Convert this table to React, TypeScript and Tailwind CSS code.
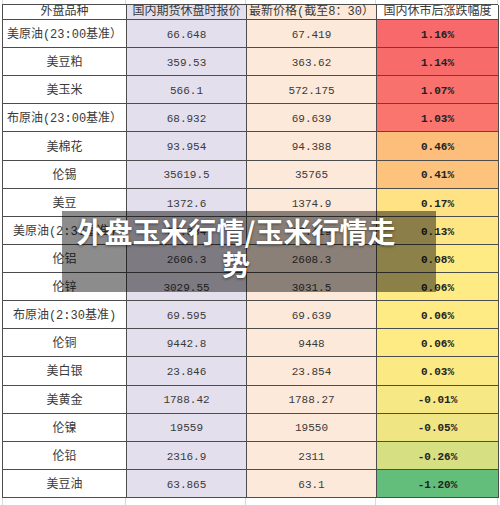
import React from 'react';

interface Row {
  name: string;
  close: string;
  latest: string;
  change: string;
  color: string;
}

const rows: Row[] = [
  { name: '美原油(23:00基准）', close: '66.648', latest: '67.419', change: '1.16%', color: '#f8696b' },
  { name: '美豆粕', close: '359.53', latest: '363.62', change: '1.14%', color: '#f86b6b' },
  { name: '美玉米', close: '566.1', latest: '572.175', change: '1.07%', color: '#f8716c' },
  { name: '布原油(23:00基准）', close: '68.932', latest: '69.639', change: '1.03%', color: '#f9756d' },
  { name: '美棉花', close: '93.954', latest: '94.388', change: '0.46%', color: '#fdbd7b' },
  { name: '伦锡', close: '35619.5', latest: '35765', change: '0.41%', color: '#fdc37c' },
  { name: '美豆', close: '1372.6', latest: '1374.9', change: '0.17%', color: '#ffe283' },
  { name: '美原油(2:30基准)', close: '67.334', latest: '67.419', change: '0.13%', color: '#ffe684' },
  { name: '伦铝', close: '2606.3', latest: '2608.3', change: '0.08%', color: '#ffeb84' },
  { name: '伦锌', close: '3029.55', latest: '3031.5', change: '0.06%', color: '#feeb84' },
  { name: '布原油(2:30基准)', close: '69.595', latest: '69.639', change: '0.06%', color: '#feeb84' },
  { name: '伦铜', close: '9442.8', latest: '9448', change: '0.06%', color: '#feeb84' },
  { name: '美白银', close: '23.846', latest: '23.854', change: '0.03%', color: '#fbea84' },
  { name: '美黄金', close: '1788.42', latest: '1788.27', change: '-0.01%', color: '#f6e884' },
  { name: '伦镍', close: '19559', latest: '19550', change: '-0.05%', color: '#efe683' },
  { name: '伦铅', close: '2316.9', latest: '2311', change: '-0.26%', color: '#d6df81' },
  { name: '美豆油', close: '63.865', latest: '63.1', change: '-1.20%', color: '#63be7b' }
];

const font = "font-['Liberation_Mono','Noto_Sans_CJK_SC',monospace]";

const Strip: React.FC<{ h: string }> = ({ h }) => (
  <div className={`grid grid-cols-[124px_120px_130px_122px] pl-[2px] ${h}`}>
    <div className="border-l border-r border-[#d9d9d9]" />
    <div className="border-r border-[#d9d9d9]" />
    <div className="border-r border-[#d9d9d9]" />
    <div className="border-r border-[#d9d9d9]" />
  </div>
);

const App: React.FC = () => {
  return (
    <div className="relative h-[505px] w-[500px] overflow-hidden bg-white">
      <Strip h="h-[4px]" />

      <div className="pl-[2px]">
        <div className={`grid h-[494px] w-[496px] grid-cols-[124px_120px_130px_122px] grid-rows-[15px_repeat(17,minmax(0,1fr))] border-l border-t border-[#4d4d4d] text-[#3a3a3a] ${font}`}>
          <div className="flex items-end justify-center border-b border-r border-[#4d4d4d] bg-white text-[12px] leading-[14px]">外盘品种</div>
          <div className="flex items-end justify-center border-b border-r border-[#4d4d4d] bg-[#e4dfec] text-[12px] leading-[14px]">国内期货休盘时报价</div>
          <div className="flex items-end justify-center border-b border-r border-[#4d4d4d] bg-[#fde9d9] text-[12px] leading-[14px]">最新价格(截至8：30）</div>
          <div className="flex items-end justify-center border-b border-r border-[#4d4d4d] bg-white text-[12px] leading-[14px]">国内休市后涨跌幅度</div>

          {rows.map((r) => (
            <React.Fragment key={r.name}>
              <div className="flex items-center justify-center whitespace-nowrap border-b border-r border-[#4d4d4d] bg-white pt-[3px] text-[12px]">{r.name}</div>
              <div className="flex items-center justify-center border-b border-r border-[#4d4d4d] bg-[#e4dfec] pt-[3px] text-[11px]">{r.close}</div>
              <div className="flex items-center justify-center border-b border-r border-[#4d4d4d] bg-[#fde9d9] pt-[3px] text-[11px]">{r.latest}</div>
              <div
                className="flex items-center justify-center border-b border-r border-[#4d4d4d] pt-[3px] text-[11px] font-bold text-[#222]"
                style={{ backgroundColor: r.color }}
              >
                {r.change}
              </div>
            </React.Fragment>
          ))}
        </div>
      </div>

      <Strip h="h-[7px]" />

      <div className="absolute left-[62px] top-[211px] h-[81px] w-[374px] bg-black/45 pl-[6px] pt-[4px]">
        <div className="w-[336px] text-center font-['Noto_Sans_CJK_SC',sans-serif] text-[28px] font-bold leading-[33px] text-white [text-shadow:0_1px_3px_rgba(0,0,0,0.5)]">
          外盘玉米行情/玉米行情走势
        </div>
      </div>
    </div>
  );
};

export default App;
